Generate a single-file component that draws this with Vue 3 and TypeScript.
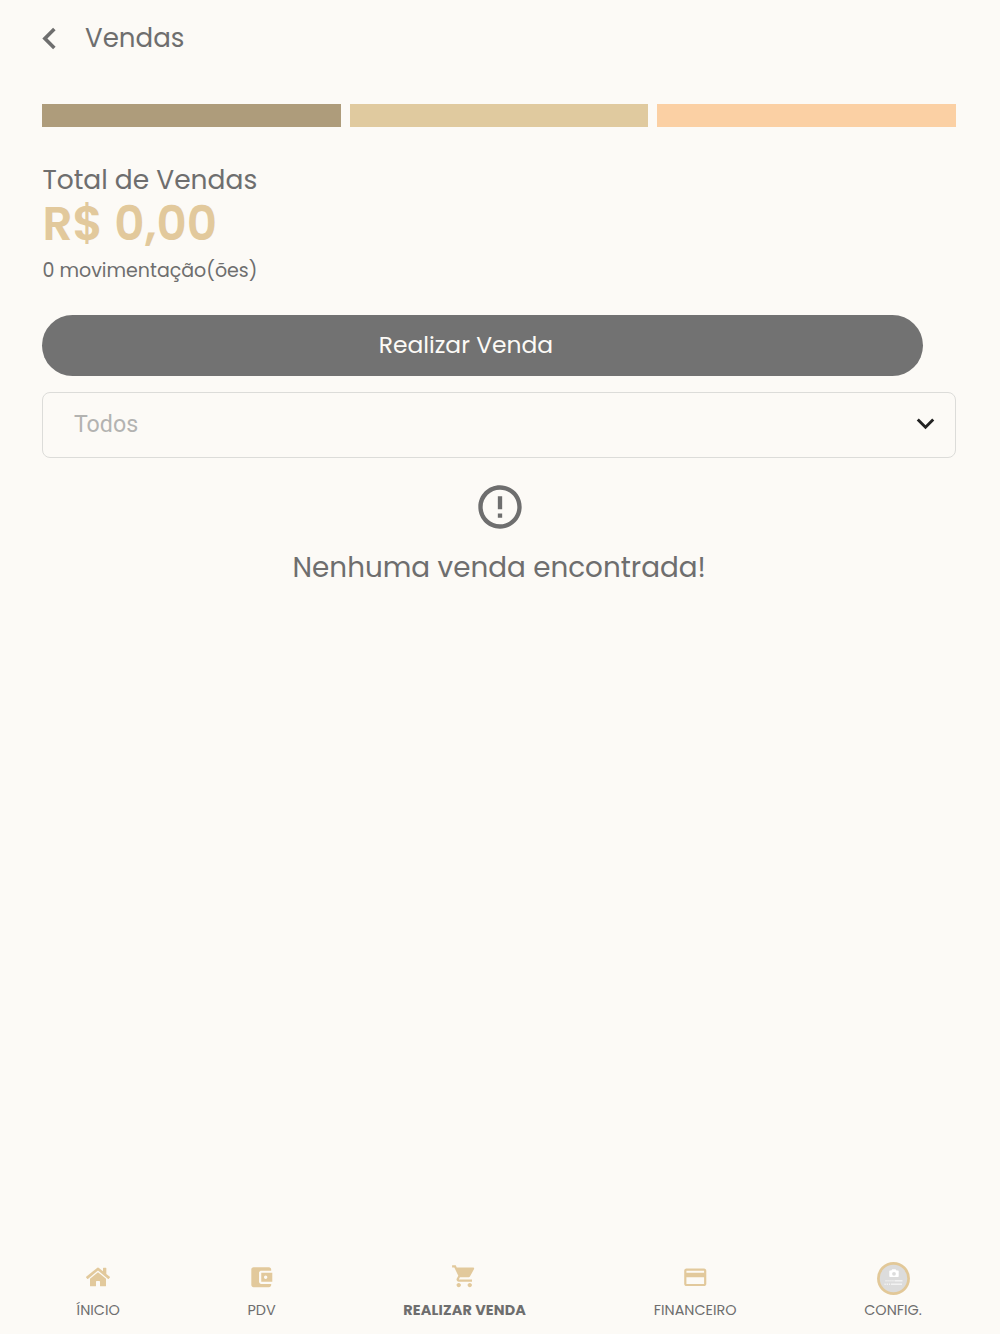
<script setup lang="ts">
interface NavItem {
  label: string
  icon: 'home' | 'wallet' | 'cart' | 'card' | 'avatar'
  active?: boolean
}

const segments: string[] = ['#ae9c7b', '#e0ca9f', '#fbd0a4']

const nav: NavItem[] = [
  { label: 'ÍNICIO', icon: 'home' },
  { label: 'PDV', icon: 'wallet' },
  { label: 'REALIZAR VENDA', icon: 'cart', active: true },
  { label: 'FINANCEIRO', icon: 'card' },
  { label: 'CONFIG.', icon: 'avatar' },
]

const paths: Record<string, string> = {
  wallet:
    'M21 18v1c0 1.1-.9 2-2 2H5c-1.11 0-2-.9-2-2V5c0-1.1.89-2 2-2h14c1.1 0 2 .9 2 2v1h-9c-1.11 0-2 .9-2 2v8c0 1.1.89 2 2 2h9zm-9-2h10V8H12v8zm4-2.5c-.83 0-1.5-.67-1.5-1.5s.67-1.5 1.5-1.5 1.5.67 1.5 1.5-.67 1.5-1.5 1.5z',
  cart:
    'M7 18c-1.1 0-1.99.9-1.99 2S5.9 22 7 22s2-.9 2-2-.9-2-2-2zM1 2v2h2l3.6 7.59-1.35 2.45c-.16.28-.25.61-.25.96 0 1.1.9 2 2 2h12v-2H7.42c-.14 0-.25-.11-.25-.25l.03-.12.9-1.63h7.45c.75 0 1.41-.41 1.75-1.03l3.58-6.49c.08-.14.12-.31.12-.48 0-.55-.45-1-1-1H5.21l-.94-2H1zm16 16c-1.1 0-1.99.9-1.99 2s.89 2 1.99 2 2-.9 2-2-.9-2-2-2z',
  card:
    'M20 4H4c-1.11 0-1.99.89-1.99 2L2 18c0 1.11.89 2 2 2h16c1.11 0 2-.89 2-2V6c0-1.11-.89-2-2-2zm0 14H4v-6h16v6zm0-10H4V6h16v2z',
}
</script>

<template>
  <div class="screen">
    <header class="top">
      <svg class="back" viewBox="0 0 24 24"><path d="M15.41 7.41 14 6l-6 6 6 6 1.41-1.41L10.83 12z" /></svg>
      <h1 class="title">Vendas</h1>
    </header>

    <main class="content">
      <div class="segments">
        <div v-for="color in segments" :key="color" class="segment" :style="{ background: color }"></div>
      </div>

      <section class="summary">
        <div class="summary-label">Total de Vendas</div>
        <div class="summary-value">R$ 0,00</div>
        <div class="summary-count">0 movimentação(ões)</div>
      </section>

      <button class="sell" type="button">Realizar Venda</button>

      <div class="select">
        <span>Todos</span>
        <svg viewBox="0 0 24 24"><path d="M16.59 8.59 12 13.17 7.41 8.59 6 10l6 6 6-6z" /></svg>
      </div>

      <section class="empty">
        <svg viewBox="0 0 24 24">
          <path d="M11 15h2v2h-2zm0-8h2v6h-2zm.99-5C6.47 2 2 6.48 2 12s4.47 10 9.99 10C17.52 22 22 17.52 22 12S17.52 2 11.99 2zM12 20c-4.42 0-8-3.58-8-8s3.58-8 8-8 8 3.58 8 8-3.58 8-8 8z" />
        </svg>
        <p>Nenhuma venda encontrada!</p>
      </section>
    </main>

    <nav class="nav">
      <a v-for="item in nav" :key="item.label" class="nav-item" :class="{ active: item.active }">
        <span class="nav-icon">
          <svg v-if="item.icon === 'home'" class="home" viewBox="0 0 576 512">
            <path d="M280.37 148.26L96 300.11V464a16 16 0 0 0 16 16l112.06-.29a16 16 0 0 0 15.92-16V368a16 16 0 0 1 16-16h64a16 16 0 0 1 16 16v95.64a16 16 0 0 0 16 16.05L464 480a16 16 0 0 0 16-16V300L295.67 148.26a12.19 12.19 0 0 0-15.3 0zM571.6 251.47L488 182.56V44.05a12 12 0 0 0-12-12h-56a12 12 0 0 0-12 12v72.61L318.47 43a48 48 0 0 0-61 0L4.34 251.47a12 12 0 0 0-1.6 16.9l25.5 31A12 12 0 0 0 45.15 301l235.22-193.74a12.19 12.19 0 0 1 15.3 0L530.9 301a12 12 0 0 0 16.9-1.6l25.5-31a12 12 0 0 0-1.7-16.93z" />
          </svg>
          <svg v-else-if="item.icon === 'avatar'" class="avatar" viewBox="0 0 33 33">
            <circle cx="16.5" cy="16.5" r="15.1" fill="#dcdcdc" stroke="#e2c898" stroke-width="2.7" />
            <path fill="#fff" fill-rule="evenodd" d="M13 8.400h1.300l.9-1.200h3.400l.9 1.200h1.500q.7 0 .7.700v5.200q0 .7-.7.700h-8q-.7 0-.7-.7v-5.200q0-.7.700-.7zM17 9.900a1.900 1.900 0 1 0 0 3.800 1.900 1.900 0 1 0 0-3.800z" />
            <g fill="none" stroke="#f4f4f4" stroke-width="1.4">
              <path stroke-dasharray="1.1 .9" d="M8.5 18.800h9" />
              <path d="M18 18.800h7.500" />
              <path stroke-dasharray="1.2 1" d="M7.5 22.200h6" />
              <path d="M14 22.200h11" />
            </g>
          </svg>
          <svg v-else class="glyph" :class="item.icon" viewBox="0 0 24 24"><path :d="paths[item.icon]" /></svg>
        </span>
        <span class="nav-label">{{ item.label }}</span>
      </a>
    </nav>
  </div>
</template>

<style>
body {
  margin: 0;
  background: #fcfaf6;
}
</style>

<style scoped>
.screen {
  box-sizing: border-box;
  height: 1334px;
  display: flex;
  flex-direction: column;
  background: #fcfaf6;
  color: #6e6e6e;
  font-family: Poppins, Inter, 'Liberation Sans', sans-serif;
}

svg {
  display: block;
  fill: currentColor;
}

.top {
  display: flex;
  align-items: center;
  height: 76px;
  padding-left: 28px;
}

.back {
  width: 43px;
  height: 43px;
}

.title {
  margin: 1px 0 0 14px;
  font-size: 26.1px;
  font-weight: 400;
}

.content {
  flex: 1;
  padding: 27.5px 44px 0 42.4px;
}

.segments {
  display: flex;
  gap: 9px;
}

.segment {
  flex: 1;
  height: 23px;
}

.summary {
  margin-top: 37px;
}

.summary-label {
  height: 32px;
  line-height: 32px;
  font-size: 26.5px;
}

.summary-value {
  height: 56px;
  line-height: 56px;
  font-size: 46.9px;
  font-weight: 600;
  color: #e2c99c;
}

.summary-count {
  height: 38px;
  line-height: 38px;
  font-size: 19px;
}

.sell {
  display: block;
  width: 881px;
  height: 61.5px;
  margin-top: 25.4px;
  padding: 0 34px 2px 0;
  border: 0;
  border-radius: 31px;
  background: #727272;
  color: #fcfaf6;
  font: inherit;
  font-size: 23.4px;
}

.select {
  box-sizing: border-box;
  display: flex;
  align-items: center;
  justify-content: space-between;
  height: 66.5px;
  margin-top: 15.6px;
  padding: 0 12px 3px 30.5px;
  border: 1.5px solid #dcdcd9;
  border-radius: 8px;
  color: #b3b3b1;
  font-family: Roboto, sans-serif;
  font-size: 23.2px;
}

.select svg {
  width: 35px;
  height: 35px;
  fill: #222;
}

.empty {
  display: flex;
  flex-direction: column;
  align-items: center;
  padding-top: 22.4px;
}

.empty svg {
  width: 52px;
  height: 52px;
  margin-left: 1px;
}

.empty p {
  margin: 15.500px 0 0;
  line-height: 40px;
  font-size: 27.8px;
}

.nav {
  display: flex;
  justify-content: space-between;
  height: 76px;
  padding: 0 78.2px 0 76.6px;
}

.nav-item {
  display: flex;
  flex-direction: column;
  align-items: center;
}

.nav-icon {
  display: flex;
  align-items: center;
  justify-content: center;
  height: 38px;
  color: #e2c99c;
}

.glyph {
  width: 26.5px;
  height: 26.5px;
}

.glyph.cart {
  margin-bottom: 2px;
}

.home {
  width: 24px;
  height: 22px;
}

.avatar {
  width: 33px;
  height: 33px;
  margin-top: 3.500px;
}

.nav-label {
  height: 28px;
  line-height: 28px;
  font-size: 14.4px;
}

.active .nav-label {
  font-weight: 700;
  letter-spacing: 0.15px;
}
</style>
